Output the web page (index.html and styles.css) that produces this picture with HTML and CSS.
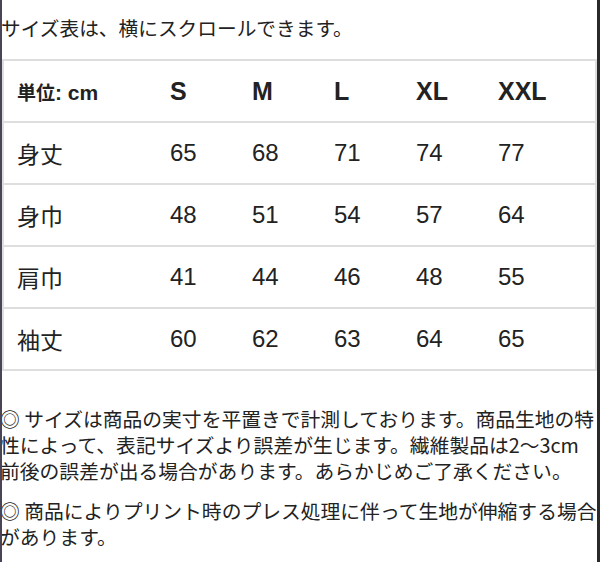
FILE: index.html
```html
<!DOCTYPE html>
<html lang="ja">
<head>
<meta charset="utf-8">
<link rel="stylesheet" href="styles.css">
</head>
<body>
<div class="page">
  <p class="hint">サイズ表は、横にスクロールできます。</p>
  <table class="size-table">
    <colgroup>
      <col class="c-label"><col class="c-size"><col class="c-size"><col class="c-size"><col class="c-size"><col class="c-last">
    </colgroup>
    <thead>
      <tr>
        <th class="unit"><span class="unit-kanji">単位</span>: cm</th>
        <th>S</th><th>M</th><th>L</th><th>XL</th><th>XXL</th>
      </tr>
    </thead>
    <tbody>
      <tr><td>身丈</td><td>65</td><td>68</td><td>71</td><td>74</td><td>77</td></tr>
      <tr><td>身巾</td><td>48</td><td>51</td><td>54</td><td>57</td><td>64</td></tr>
      <tr><td>肩巾</td><td>41</td><td>44</td><td>46</td><td>48</td><td>55</td></tr>
      <tr><td>袖丈</td><td>60</td><td>62</td><td>63</td><td>64</td><td>65</td></tr>
    </tbody>
  </table>
  <div class="notes">
    <p>◎ サイズは商品の実寸を平置きで計測しております。商品生地の特性によって、表記サイズより誤差が生じます。繊維製品は2〜3cm前後の誤差が出る場合があります。あらかじめご了承ください。</p>
    <p>◎ 商品によりプリント時のプレス処理に伴って生地が伸縮する場合があります。</p>
  </div>
</div>
</body>
</html>
```
FILE: styles.css
```css
html, body {
  margin: 0;
  padding: 0;
  background: #fff;
}
body {
  width: 600px;
  height: 562px;
  overflow: hidden;
  font-family: "Liberation Sans", "Noto Sans CJK JP", sans-serif;
  color: #222;
}
.page {
  position: relative;
  height: 562px;
  overflow: hidden;
}
.page::before,
.page::after {
  content: "";
  position: absolute;
  top: 0;
  bottom: 0;
}
.page::before {
  left: 0;
  width: 2px;
  background: #4a4556;
}
.page::after {
  right: 0;
  width: 3px;
  background: #2a2a2a;
}
.hint {
  margin: 0 0 0 1px;
  padding: 14px 0 0 0;
  font-size: 19.7px;
  line-height: 28px;
  height: 28px;
  font-family: "Noto Sans CJK JP", sans-serif;
}
.size-table {
  margin: 17px 0 0 2px;
  width: 595px;
  border-collapse: collapse;
  table-layout: fixed;
  border: 2px solid #dedede;
}
.c-label { width: 154px; }
.c-size { width: 82px; }
.c-last { width: auto; }
.size-table th,
.size-table td {
  text-align: left;
  padding: 0 0 0 13px;
  height: 60px;
  border-bottom: 2px solid #dedede;
  white-space: nowrap;
}
.size-table th {
  font-size: 25px;
  font-weight: bold;
}
.size-table th.unit {
  font-size: 21px;
}
.unit-kanji {
  font-family: "Noto Sans CJK JP", sans-serif;
  font-size: 19px;
}
.size-table td {
  font-size: 24px;
  font-weight: normal;
}
.size-table td:first-child {
  font-family: "Noto Sans CJK JP", sans-serif;
  font-size: 23px;
}
.notes {
  width: 598px;
  padding-top: 35px;
  font-family: "Noto Sans CJK JP", sans-serif;
  font-size: 19.8px;
  line-height: 26px;
}
.notes p {
  margin: 0 0 14px 0;
}
```
